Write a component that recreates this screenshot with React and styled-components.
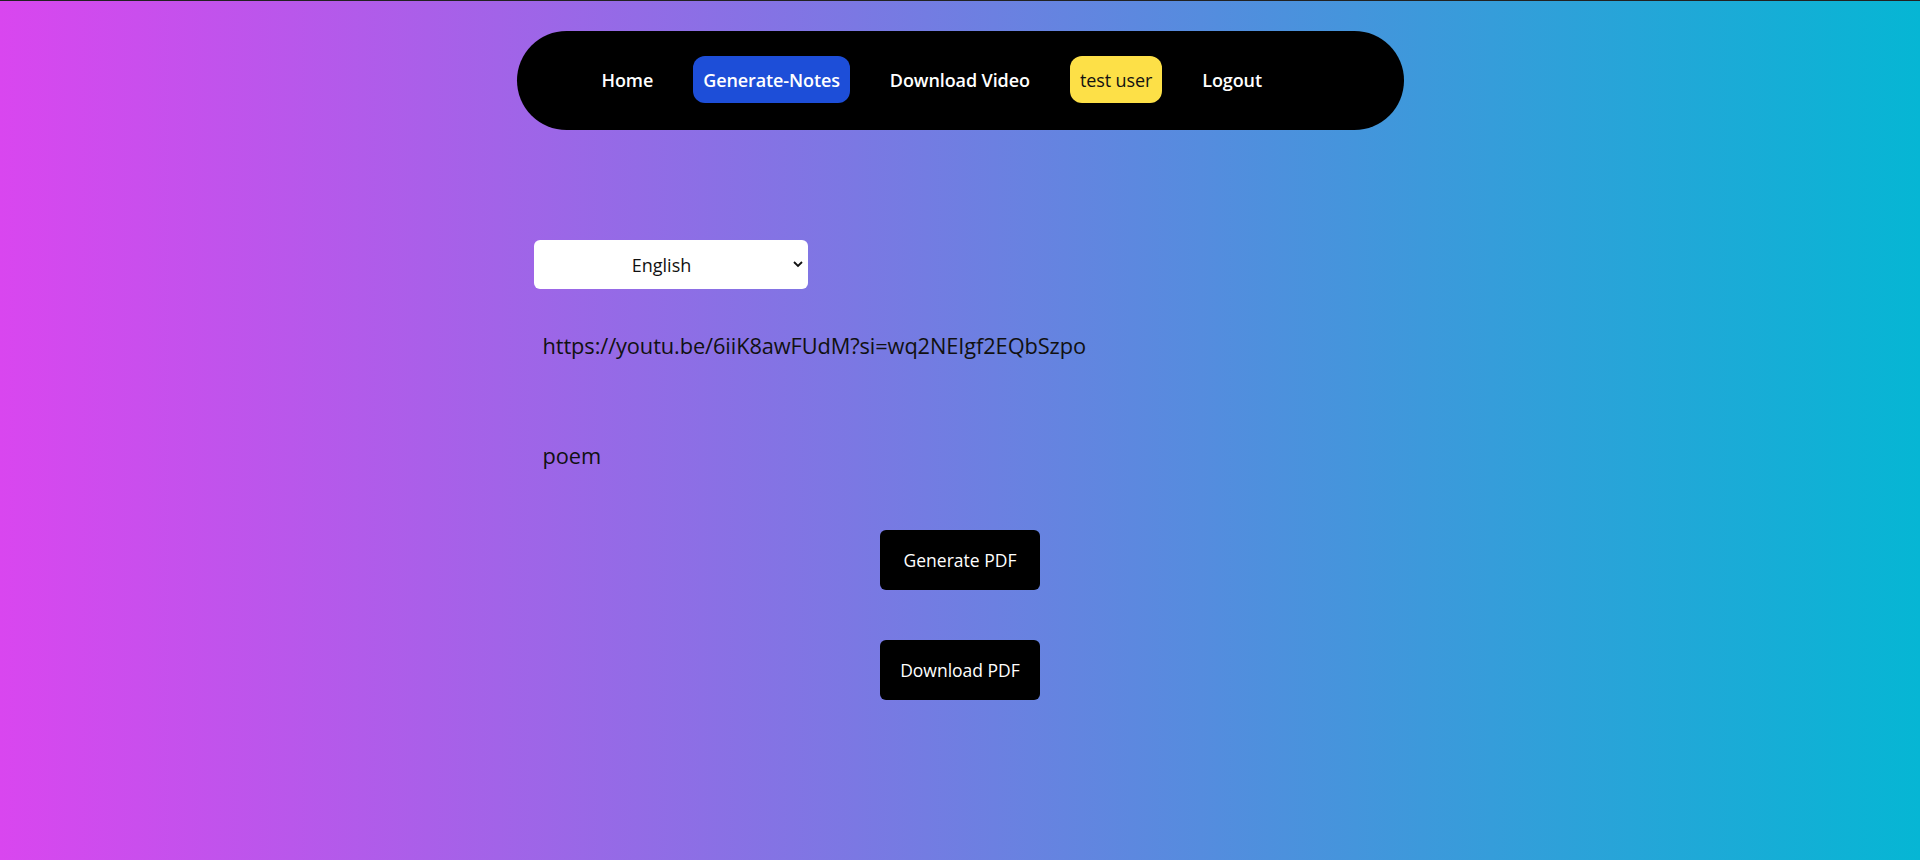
import React from "react";
import styled, { createGlobalStyle } from "styled-components";

const Global = createGlobalStyle`
  html, body { margin: 0; padding: 0; }
  body {
    font-family: "Open Sans", "Noto Sans", sans-serif;
    min-height: 860px;
    background: linear-gradient(to right, #d946ef, #06b6d4);
    border-top: 1px solid #222;
    box-sizing: border-box;
  }
  * { box-sizing: border-box; }
`;

const Page = styled.div`
  min-height: 859px;
  display: flex;
  flex-direction: column;
  align-items: center;
  padding-top: 30px;
`;

const NavBar = styled.nav`
  width: 887px;
  height: 99px;
  background: #000;
  border-radius: 50px;
  display: flex;
  align-items: center;
  gap: 30px;
  padding: 0 0 2px 75px;
`;

const NavLink = styled.a`
  display: inline-flex;
  align-items: center;
  height: 47px;
  padding: 0 10px;
  border-radius: 12px;
  font-size: 18px;
  letter-spacing: -0.1px;
  color: ${(p) => (p.$variant === "user" ? "#111" : "#fff")};
  font-weight: ${(p) => (p.$variant === "user" ? 500 : 600)};
  background: ${(p) =>
    p.$variant === "active" ? "#1d4ed8" : p.$variant === "user" ? "#fde047" : "transparent"};
  text-decoration: none;
  cursor: pointer;
`;

const Content = styled.main`
  width: 887px;
  padding: 110px 0 0 17px;
  display: flex;
  flex-direction: column;
`;

const SelectWrap = styled.div`
  position: relative;
  width: 274px;
  height: 49px;
`;

const Select = styled.select`
  appearance: none;
  width: 100%;
  height: 100%;
  border: none;
  border-radius: 6px;
  background: #fff;
  font-family: inherit;
  font-size: 18px;
  color: #111;
  text-align: center;
  text-align-last: center;
  padding: 0 18px 0 0;
  outline: none;
`;

const Chevron = styled.svg`
  position: absolute;
  right: 5px;
  top: 20px;
  pointer-events: none;
`;

const Field = styled.div`
  padding-left: 9px;
  font-size: 21.8px;
  color: #111;
  letter-spacing: -0.1px;
  margin-top: ${(p) => p.$top}px;
  line-height: 30px;
`;

const Actions = styled.div`
  display: flex;
  flex-direction: column;
  align-items: center;
  gap: 50px;
  margin-top: 59px;
  margin-left: -17px;
`;

const Button = styled.button`
  width: 160px;
  height: 60px;
  background: #000;
  color: #fff;
  border: none;
  border-radius: 6px;
  font-family: inherit;
  font-size: 17.5px;
  cursor: pointer;
`;

export default function App() {
  return (
    <>
      <Global />
      <Page>
        <NavBar>
          <NavLink>Home</NavLink>
          <NavLink $variant="active">Generate-Notes</NavLink>
          <NavLink>Download Video</NavLink>
          <NavLink $variant="user">test user</NavLink>
          <NavLink>Logout</NavLink>
        </NavBar>
        <Content>
          <SelectWrap>
            <Select defaultValue="en">
              <option value="en">English</option>
              <option value="hi">Hindi</option>
            </Select>
            <Chevron width="10" height="8" viewBox="0 0 10 8">
              <path d="M1 2 L5 6 L9 2" fill="none" stroke="#111" strokeWidth="1.8" />
            </Chevron>
          </SelectWrap>
          <Field $top={42}>https://youtu.be/6iiK8awFUdM?si=wq2NEIgf2EQbSzpo</Field>
          <Field $top={80}>poem</Field>
          <Actions>
            <Button>Generate PDF</Button>
            <Button>Download PDF</Button>
          </Actions>
        </Content>
      </Page>
    </>
  );
}
